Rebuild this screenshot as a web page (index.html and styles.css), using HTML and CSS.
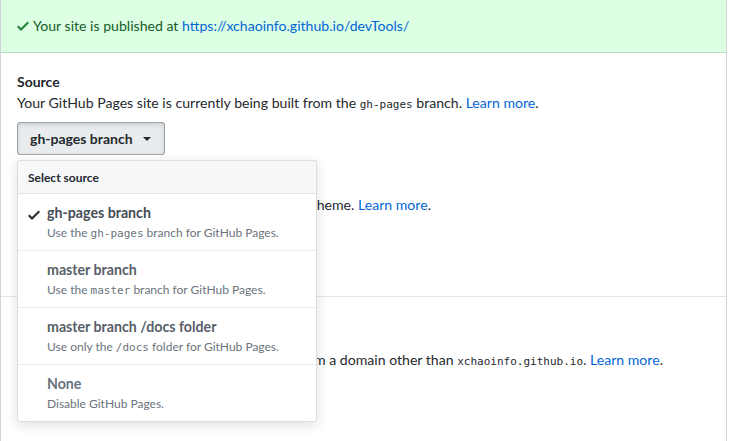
FILE: index.html
```html
<!DOCTYPE html>
<html>
<head>
<meta charset="utf-8">
<link rel="stylesheet" href="styles.css">
</head>
<body>
<div class="box">
  <div class="flash">
    <svg class="flash-icon" viewBox="0 0 12 16" width="12" height="16"><path d="M12 5l-8 8-4-4 1.5-1.5L4 10l6.5-6.5L12 5z"/></svg>
    <span>Your site is published at <a href="#">https://xchaoinfo.github.io/devTools/</a></span>
  </div>
  <div class="section">
    <h3 class="heading">Source</h3>
    <p class="note">Your GitHub Pages site is currently being built from the <code>gh-pages</code> branch. <a href="#">Learn more</a>.</p>
    <div class="select-menu">
      <button class="btn btn-selected">gh-pages branch <span class="caret"></span></button>
      <div class="menu-modal">
        <div class="menu-header">Select source</div>
        <div class="menu-item is-selected">
          <svg class="menu-check" viewBox="0 0 12 16" width="12" height="16"><path d="M12 5l-8 8-4-4 1.5-1.5L4 10l6.5-6.5L12 5z"/></svg>
          <div class="item-title">gh-pages branch</div>
          <div class="item-desc">Use the <code>gh-pages</code> branch for GitHub Pages.</div>
        </div>
        <div class="menu-item">
          <div class="item-title">master branch</div>
          <div class="item-desc">Use the <code>master</code> branch for GitHub Pages.</div>
        </div>
        <div class="menu-item">
          <div class="item-title">master branch /docs folder</div>
          <div class="item-desc">Use only the <code>/docs</code> folder for GitHub Pages.</div>
        </div>
        <div class="menu-item is-muted">
          <div class="item-title">None</div>
          <div class="item-desc">Disable GitHub Pages.</div>
        </div>
      </div>
    </div>
    <h3 class="heading theme-heading">Theme chooser</h3>
    <p class="note">Select a theme to publish your site with a Jekyll theme. <a href="#">Learn more</a>.</p>
    <div class="theme-actions">
      <button class="btn">Change theme</button>
    </div>
  </div>
  <div class="section section-bordered domain-section">
    <h3 class="heading">Custom domain</h3>
    <p class="note">Custom domain allows you to serve your site from a domain other than <code>xchaoinfo.github.io</code>. <a href="#">Learn more</a>.</p>
    <div class="domain-form">
      <input class="form-control" type="text" value="">
    </div>
  </div>
</div>
</body>
</html>
```
FILE: styles.css
```css
* { box-sizing: border-box; }

body {
  margin: 0;
  background: #fff;
  font-family: Lato, "Noto Sans", sans-serif;
  font-size: 14px;
  color: #24292e;
}

a { color: #0366d6; text-decoration: none; }

code {
  font-family: "DejaVu Sans Mono", monospace;
  font-size: 11px;
}

.box {
  width: 727px;
  min-height: 460px;
  border-left: 1px solid #d1d5da;
  border-right: 1px solid #d1d5da;
}

.flash {
  display: flex;
  align-items: center;
  gap: 4px;
  height: 53px;
  padding: 0 16px;
  background: #dcffe4;
  border-bottom: 1px solid #b4dcbd;
  color: #165c26;
  line-height: 20px;
  font-size: 14.1px;
}

.flash-icon { fill: #22863a; flex: none; }

.section {
  padding: 18px 16px 0;
}

.section-bordered { border-top: 1px solid #e1e4e8; }

.heading {
  margin: 0;
  font-size: 14px;
  font-weight: 700;
  line-height: 21px;
}

.note {
  margin: 0;
  line-height: 21px;
  font-size: 14.1px;
}

.select-menu {
  position: relative;
  display: flex;
  margin-top: 7px;
}

.btn {
  display: inline-flex;
  align-items: center;
  gap: 10px;
  padding: 5px 13px 5px 12px;
  font-family: inherit;
  font-size: 14px;
  font-weight: 700;
  line-height: 21px;
  color: #24292e;
  background: linear-gradient(#fafbfc, #eff3f6 90%);
  border: 1px solid rgba(27, 31, 35, 0.2);
  border-radius: 3px;
}

.btn-selected {
  background: #e9ecef;
  border-color: rgba(27, 31, 35, 0.35);
  box-shadow: inset 0 0.15em 0.3em rgba(27, 31, 35, 0.15);
}

.caret {
  width: 0;
  height: 0;
  border-top: 4px solid #24292e;
  border-left: 4px solid transparent;
  border-right: 4px solid transparent;
}

.menu-modal {
  position: absolute;
  top: 38px;
  left: 0;
  z-index: 10;
  width: 300px;
  background: #fff;
  border: 1px solid rgba(27, 31, 35, 0.15);
  border-radius: 3px;
  box-shadow: 0 3px 12px rgba(27, 31, 35, 0.15);
  overflow: hidden;
}

.menu-header {
  height: 33px;
  padding: 0 10px;
  display: flex;
  align-items: center;
  background: #f6f8fa;
  border-bottom: 1px solid #e1e4e8;
  font-size: 12px;
  font-weight: 700;
  color: #24292e;
}

.menu-item {
  position: relative;
  height: 57px;
  padding: 8px 10px 8px 29px;
  border-bottom: 1px solid #eaecef;
  color: #586069;
}

.menu-item:last-child { border-bottom: 0; height: 56px; }

.menu-check {
  position: absolute;
  left: 10px;
  top: 13px;
  fill: #24292e;
}

.item-title {
  font-size: 14.2px;
  font-weight: 700;
  line-height: 22px;
}

.is-selected .item-title { color: #444d56; }

.is-muted .item-title { color: #6a737d; }

.item-desc {
  font-size: 12px;
  line-height: 18px;
  color: #6a737d;
}

.item-desc code { font-size: 11px; }

.theme-heading { margin-top: 18px; }

.theme-actions { display: flex; margin-top: 24px; padding-bottom: 24px; }

.domain-section { padding-top: 31px; }

.domain-form {
  display: flex;
  margin-top: 2px;
}

.form-control {
  width: 290px;
  height: 34px;
  padding: 6px 8px;
  font-family: inherit;
  font-size: 14px;
  border: 1px solid #d1d5da;
  border-radius: 3px;
  box-shadow: inset 0 1px 2px rgba(27, 31, 35, 0.075);
}
```
